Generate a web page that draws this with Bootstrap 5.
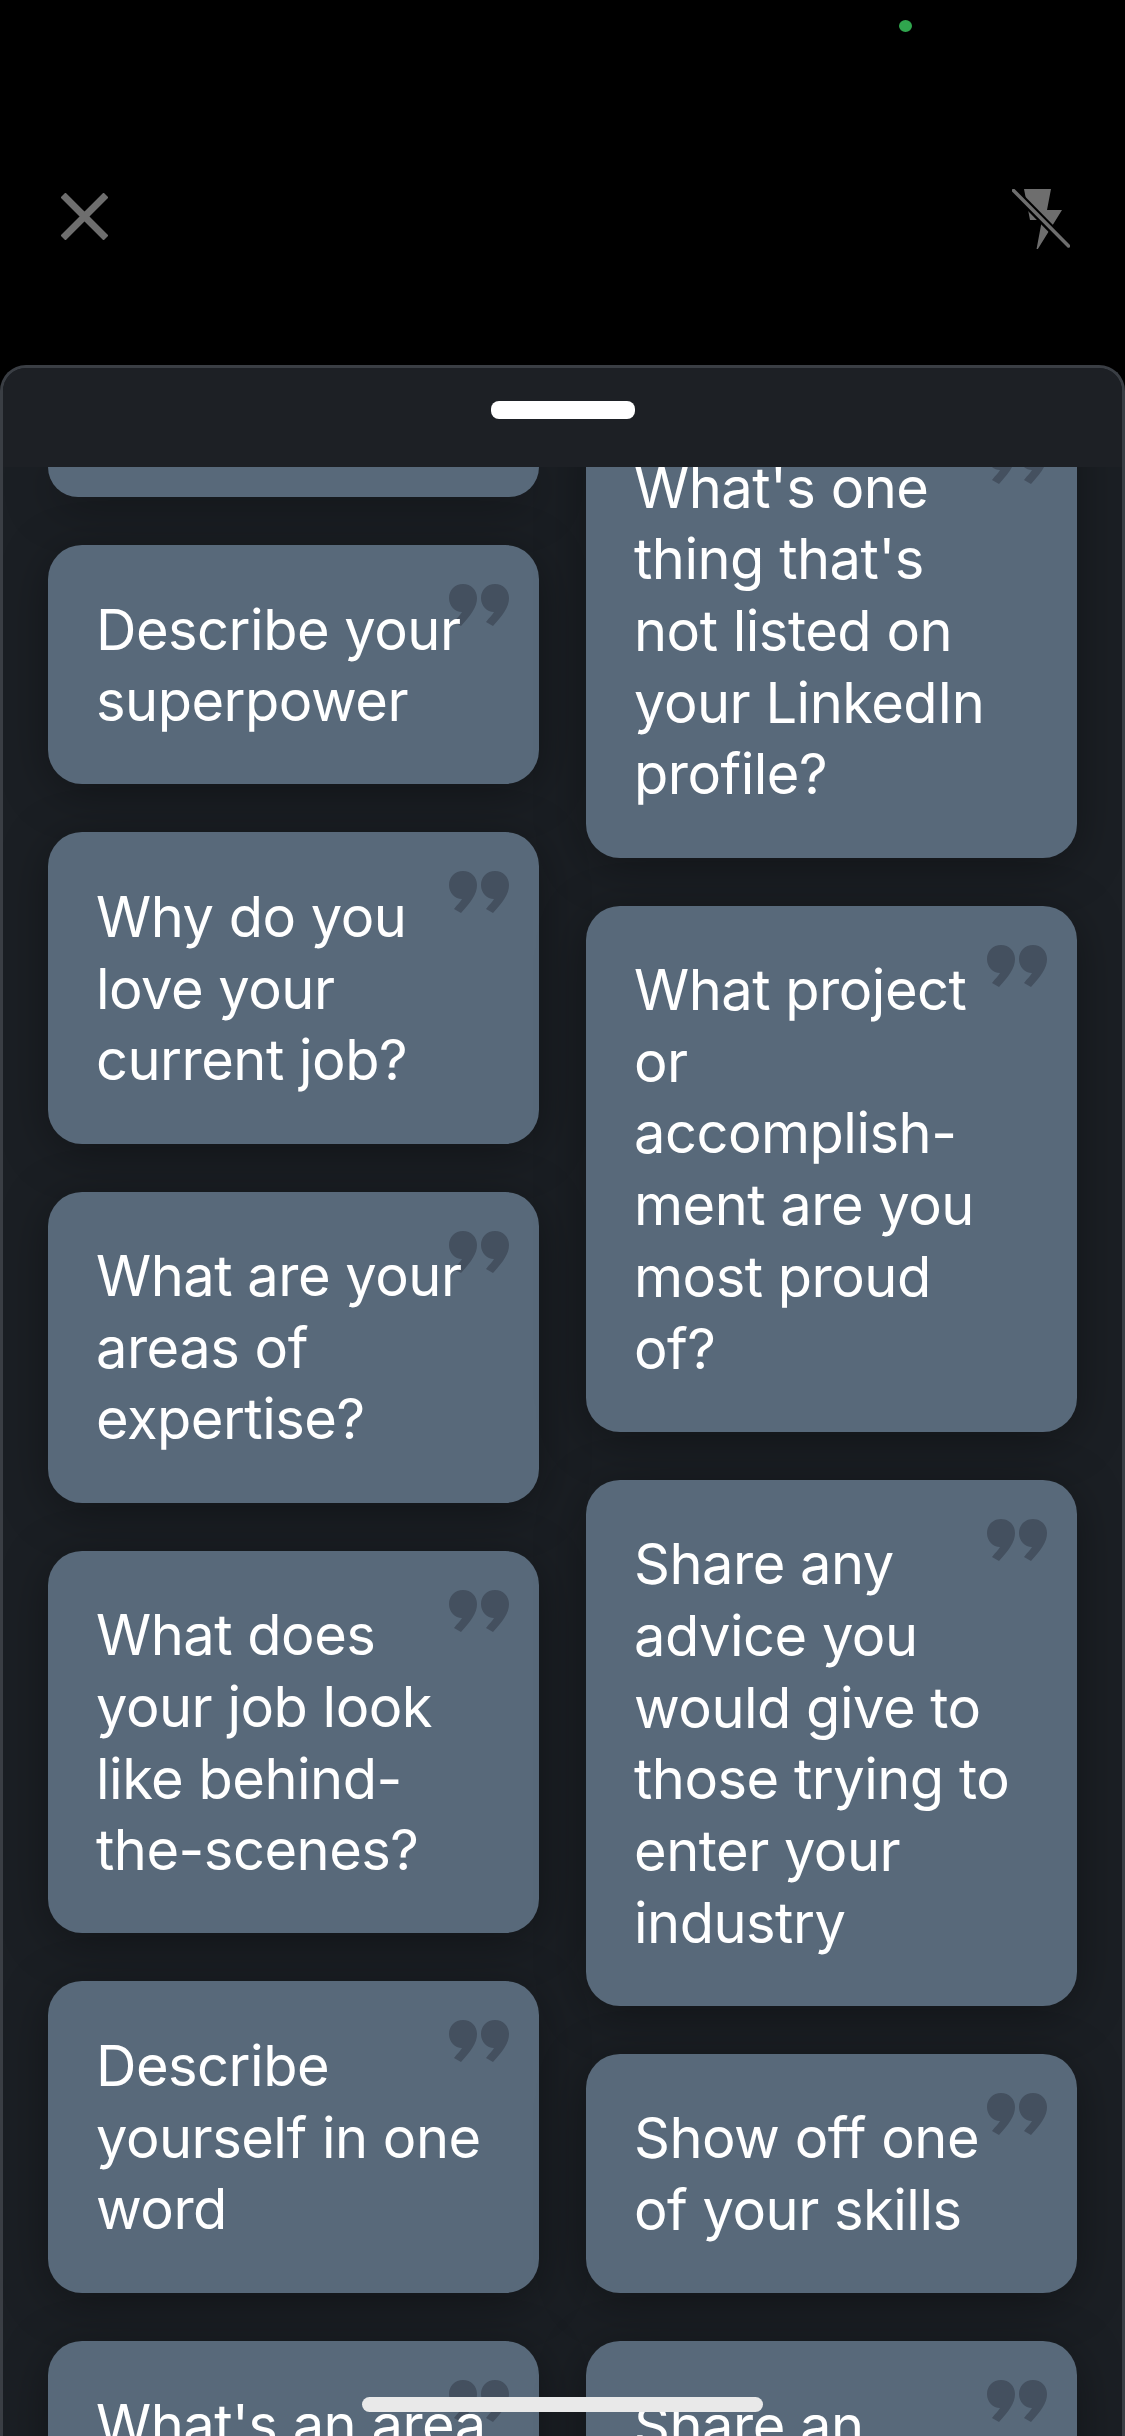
<!DOCTYPE html>
<html lang="en">
<head>
  <meta charset="UTF-8">
  <meta name="viewport" content="width=device-width, initial-scale=1.0">
  <title>Prompts</title>
  <link rel="stylesheet" href="https://cdn.jsdelivr.net/npm/bootstrap@5.3.0/dist/css/bootstrap.min.css">
  <script src="https://cdn.jsdelivr.net/npm/bootstrap@5.3.0/dist/js/bootstrap.bundle.min.js"></script>
  <style>
    html, body { height: 2436px; overflow: hidden; background: #000; }
    body { font-family: Inter, "Liberation Sans", sans-serif; position: relative; }
    .camera-bar { height: 365px; padding: 20px 55px 0 61px; }
    .rec-dot { width: 13px; height: 12px; border-radius: 50%; background: #30a64e; margin-left: 838px; }
    .camera-icons { margin-top: 157px; }
    .sheet {
      height: 2071px; overflow: hidden;
      background: #1b1f24;
      border: 3px solid #3a3e44; border-bottom: 0;
      border-radius: 26px 26px 0 0;
    }
    .sheet-head { height: 99px; background: #1d2025; padding-top: 33px; position: relative; z-index: 2; }
    .grab-handle { width: 144px; height: 18px; border-radius: 8px; background: #fff; }
    .sheet-scroll { height: 1969px; overflow: hidden; padding: 0 45px; gap: 47px; }
    .prompt-col { width: 491px; gap: 48px; flex: none; }
    .prompt-col.shifted { margin-top: -64px; }
    .prompt-tile {
      background: #58697a; color: #fff; border: 0; border-radius: 34px;
      box-shadow: 0 8px 48px rgba(0,0,0,.34);
      flex: none;
    }
    .prompt-tile .card-body {
      padding: 49.5px 48px 46.5px; position: relative;
      font-size: 56px; line-height: 71.7px; letter-spacing: -.5px; font-weight: 400; white-space: nowrap;
    }
    .prompt-tile.sliver { height: 30px; border-radius: 0 0 34px 34px; }
    .quote-mark { position: absolute; top: 39px; right: 30px; width: 60px; height: 42px; fill: #44505f; }
    .prompt-text { position: relative; }
    .home-bar {
      position: absolute; left: 362px; top: 2397px; width: 401px; height: 15px;
      border-radius: 8px; background: #e9e9e9; z-index: 5;
    }
  </style>
</head>
<body>
<svg width="0" height="0" class="position-absolute">
  <symbol id="q" viewBox="0 0 60 42">
    <path d="M14 0C22 0 28 6 28 14C28 23 22 31 12 42L5 38C9 33 12 30 13 28C6 28 0 22 0 14C0 6 6 0 14 0Z"/>
    <path d="M46 0C54 0 60 6 60 14C60 23 54 31 44 42L37 38C41 33 44 30 45 28C38 28 32 22 32 14C32 6 38 0 46 0Z"/>
  </symbol>
</svg>

<div class="camera-bar">
  <div class="rec-dot"></div>
  <div class="camera-icons d-flex justify-content-between align-items-start">
    <svg width="47" height="47" viewBox="0 0 47 47" class="mt-1" fill="none" stroke="#6e6e6e" stroke-width="7">
      <path d="M2 2L45 45M45 2L2 45"/>
    </svg>
    <svg width="58" height="60" viewBox="0 0 58 60">
      <path d="M12 3H39L35 24H50L24 66L30 34H18Z" transform="translate(0 -3)" fill="#6e6e6e"/>
      <path d="M1 1L57 58" stroke="#000" stroke-width="8"/>
      <path d="M1.5 1.5L56.5 57" stroke="#6e6e6e" stroke-width="3.5" stroke-linecap="round"/>
    </svg>
  </div>
</div>

<div class="sheet">
  <div class="sheet-head d-flex justify-content-center align-items-start">
    <div class="grab-handle"></div>
  </div>
  <div class="sheet-scroll d-flex align-items-start">
    <div class="prompt-col d-flex flex-column">
      <div class="card prompt-tile sliver"></div>
      <div class="card prompt-tile"><div class="card-body"><svg class="quote-mark"><use href="#q"/></svg><div class="prompt-text">Describe your<br>superpower</div></div></div>
      <div class="card prompt-tile"><div class="card-body"><svg class="quote-mark"><use href="#q"/></svg><div class="prompt-text">Why do you<br>love your<br>current job?</div></div></div>
      <div class="card prompt-tile"><div class="card-body"><svg class="quote-mark"><use href="#q"/></svg><div class="prompt-text">What are your<br>areas of<br>expertise?</div></div></div>
      <div class="card prompt-tile"><div class="card-body"><svg class="quote-mark"><use href="#q"/></svg><div class="prompt-text">What does<br>your job look<br>like behind-<br>the-scenes?</div></div></div>
      <div class="card prompt-tile"><div class="card-body"><svg class="quote-mark"><use href="#q"/></svg><div class="prompt-text">Describe<br>yourself in one<br>word</div></div></div>
      <div class="card prompt-tile"><div class="card-body"><svg class="quote-mark"><use href="#q"/></svg><div class="prompt-text">What's an area<br>of your work</div></div></div>
    </div>
    <div class="prompt-col shifted d-flex flex-column">
      <div class="card prompt-tile"><div class="card-body"><svg class="quote-mark"><use href="#q"/></svg><div class="prompt-text">What's one<br>thing that's<br>not listed on<br>your LinkedIn<br>profile?</div></div></div>
      <div class="card prompt-tile"><div class="card-body"><svg class="quote-mark"><use href="#q"/></svg><div class="prompt-text">What project<br>or<br>accomplish-<br>ment are you<br>most proud<br>of?</div></div></div>
      <div class="card prompt-tile"><div class="card-body"><svg class="quote-mark"><use href="#q"/></svg><div class="prompt-text">Share any<br>advice you<br>would give to<br>those trying to<br>enter your<br>industry</div></div></div>
      <div class="card prompt-tile"><div class="card-body"><svg class="quote-mark"><use href="#q"/></svg><div class="prompt-text">Show off one<br>of your skills</div></div></div>
      <div class="card prompt-tile"><div class="card-body"><svg class="quote-mark"><use href="#q"/></svg><div class="prompt-text">Share an<br>industry tip</div></div></div>
    </div>
  </div>
</div>
<div class="home-bar"></div>
</body>
</html>
